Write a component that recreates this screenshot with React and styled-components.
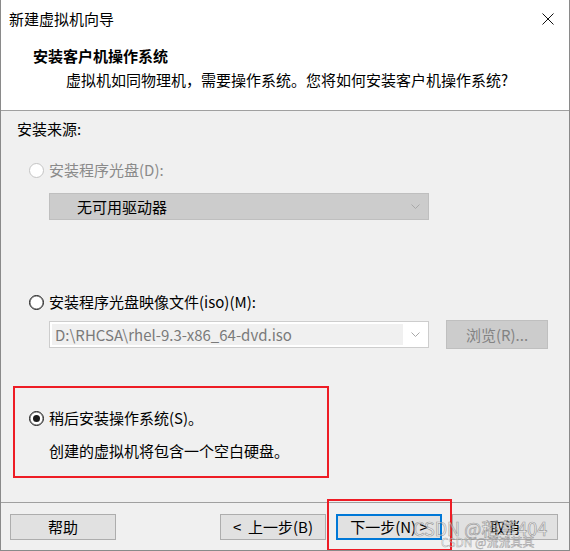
import React from 'react';
import styled, { createGlobalStyle } from 'styled-components';

const Global = createGlobalStyle`
  html, body { margin: 0; padding: 0; background: #f0f0f0; }
  body { font-family: "Noto Sans CJK SC", "Noto Sans", sans-serif; }
`;

const Window = styled.div`
  position: relative;
  width: 570px;
  height: 551px;
  box-sizing: border-box;
  border: 1px solid #8a8a8a;
  border-top: none;
  background: #f0f0f0;
  display: flex;
  flex-direction: column;
  font-family: "Noto Sans CJK SC", "Noto Sans", sans-serif;
  font-size: 15px;
  color: #000;
  overflow: hidden;
`;

const Header = styled.div`
  height: 111px;
  box-sizing: border-box;
  background: #fff;
  border-bottom: 1px solid #a0a0a0;
  display: flex;
  flex-direction: column;
`;

const TitleBar = styled.div`
  height: 38px;
  display: flex;
  align-items: center;
  justify-content: space-between;
  padding: 0 15px 0 8px;
`;

const Line = styled.div`
  line-height: 20px;
  white-space: nowrap;
  padding-left: ${p => p.$indent || 0}px;
  margin-top: ${p => p.$top || 0}px;
  font-weight: ${p => (p.$bold ? 700 : 400)};
  color: ${p => (p.$muted ? '#8a8a8a' : '#000')};
`;

const Content = styled.div`
  flex: 1;
  padding: 8px 0 0 16px;
  display: flex;
  flex-direction: column;
  position: relative;
`;

const OptionRow = styled.label`
  display: flex;
  align-items: center;
  gap: 5px;
  height: 20px;
  margin-left: 12px;
  margin-top: ${p => p.$top || 0}px;
  line-height: 20px;
  white-space: nowrap;
  color: ${p => (p.$disabled ? '#8a8a8a' : '#000')};
`;

const Radio = styled.span`
  width: 15px;
  height: 15px;
  box-sizing: border-box;
  border-radius: 50%;
  border: 1px solid ${p => (p.$disabled ? '#c4c4c4' : '#1a1a1a')};
  box-shadow: ${p => (p.$disabled ? 'none' : 'inset 0 0 0 0.6px rgba(0,0,0,0.55)')};
  background: #fff;
  display: flex;
  align-items: center;
  justify-content: center;
  flex: none;
  &::after {
    content: '';
    width: 7px;
    height: 7px;
    border-radius: 50%;
    background: ${p => (p.$checked ? '#1a1a1a' : 'transparent')};
  }
`;

const Select = styled.div`
  margin-left: 32px;
  margin-top: ${p => p.$top || 0}px;
  width: 380px;
  height: 27px;
  box-sizing: border-box;
  border: 1px solid #bfbfbf;
  background: #cccccc;
  display: flex;
  align-items: center;
  justify-content: space-between;
  padding: 0 8px 0 27px;
  line-height: 20px;
`;

const FileRow = styled.div`
  display: flex;
  align-items: center;
  gap: 17px;
  margin-left: 32px;
  margin-top: ${p => p.$top || 0}px;
  height: 29px;
`;

const Combo = styled.div`
  width: 380px;
  height: 27px;
  box-sizing: border-box;
  border: 1px solid #cdcdcd;
  background: #fff;
  display: flex;
  align-items: center;
  padding: 2px 8px 2px 2px;
  gap: 8px;
`;

const ComboField = styled.div`
  flex: 1;
  height: 100%;
  background: #f0f0f0;
  color: #7a7a7a;
  display: flex;
  align-items: center;
  padding-left: 3px;
  line-height: 20px;
  white-space: nowrap;
  overflow: hidden;
`;

const Chevron = () => (
  <svg width="9" height="5" viewBox="0 0 9 5">
    <polyline points="0.5,0.5 4.5,4.5 8.5,0.5" fill="none" stroke="#a8a8a8" strokeWidth="1" />
  </svg>
);

const Button = styled.button`
  width: ${p => p.$w || 106}px;
  height: ${p => p.$h || 26}px;
  box-sizing: border-box;
  border: ${p => (p.$default ? '2px solid #0078d7' : p.$disabled ? '1px solid #bfbfbf' : '1px solid #adadad')};
  background: ${p => (p.$disabled ? '#cccccc' : '#e1e1e1')};
  color: ${p => (p.$disabled ? '#838383' : '#000')};
  font-family: inherit;
  font-size: 15px;
  line-height: 20px;
  padding: 0;
  margin: 0;
  flex: none;
  white-space: pre;
`;

const Footer = styled.div`
  height: 48px;
  box-sizing: border-box;
  border-top: 1px solid #a0a0a0;
  display: flex;
  align-items: flex-start;
  padding: 11px 11px 0 9px;
  gap: 10px;
`;

const Spacer = styled.div`
  flex: 1;
`;

const Annotation = styled.div`
  position: absolute;
  left: ${p => p.$x}px;
  top: ${p => p.$y}px;
  width: ${p => p.$w}px;
  height: ${p => p.$h}px;
  box-sizing: border-box;
  border: 2px solid #ee1c25;
  pointer-events: none;
`;

const Watermark = styled.div`
  position: absolute;
  left: ${p => p.$x}px;
  top: ${p => p.$y}px;
  font-family: "Noto Sans CJK SC", "Noto Sans", sans-serif;
  font-size: ${p => p.$size}px;
  color: rgba(255, 255, 255, 0.5);
  -webkit-text-stroke: ${p => (p.$size > 14 ? 0.7 : 0.5)}px rgba(80, 80, 80, 0.5);
  white-space: nowrap;
  pointer-events: none;
  line-height: 1;
`;

const CloseIcon = () => (
  <svg width="12" height="12" viewBox="0 0 12 12">
    <line x1="0.5" y1="0.5" x2="11.5" y2="11.5" stroke="#111" strokeWidth="1" />
    <line x1="11.5" y1="0.5" x2="0.5" y2="11.5" stroke="#111" strokeWidth="1" />
  </svg>
);

export default function App() {
  return (
    <>
      <Global />
      <Window>
        <Header>
          <TitleBar>
            <Line>新建虚拟机向导</Line>
            <CloseIcon />
          </TitleBar>
          <Line $bold $indent={32} $top={8}>安装客户机操作系统</Line>
          <Line $indent={65} $top={4}>虚拟机如同物理机，需要操作系统。您将如何安装客户机操作系统?</Line>
        </Header>
        <Content>
          <Line>安装来源:</Line>
          <OptionRow $disabled $top={21}>
            <Radio $disabled />
            安装程序光盘(D):
          </OptionRow>
          <Select $top={13}>
            <span>无可用驱动器</span>
            <Chevron />
          </Select>
          <OptionRow $top={72}>
            <Radio />
            安装程序光盘映像文件(iso)(M):
          </OptionRow>
          <FileRow $top={8}>
            <Combo>
              <ComboField>D:\RHCSA\rhel-9.3-x86_64-dvd.iso</ComboField>
              <Chevron />
            </Combo>
            <Button $disabled $w={102} $h={29}>浏览(R)...</Button>
          </FileRow>
          <OptionRow $top={59}>
            <Radio $checked />
            稍后安装操作系统(S)。
          </OptionRow>
          <Line $indent={32} $top={13}>创建的虚拟机将包含一个空白硬盘。</Line>
        </Content>
        <Footer>
          <Button>帮助</Button>
          <Spacer />
          <Button>{'<  上一步(B)'}</Button>
          <Button $default>{'下一步(N) >'}</Button>
          <Button>取消</Button>
        </Footer>
        <Annotation $x={12} $y={386} $w={316} $h={92} />
        <Annotation $x={326} $y={499} $w={125} $h={52} />
        <Watermark $x={412} $y={519} $size={18}>CSDN @稻草404</Watermark>
        <Watermark $x={440} $y={536} $size={12}>CSDN @流流其其</Watermark>
      </Window>
    </>
  );
}
